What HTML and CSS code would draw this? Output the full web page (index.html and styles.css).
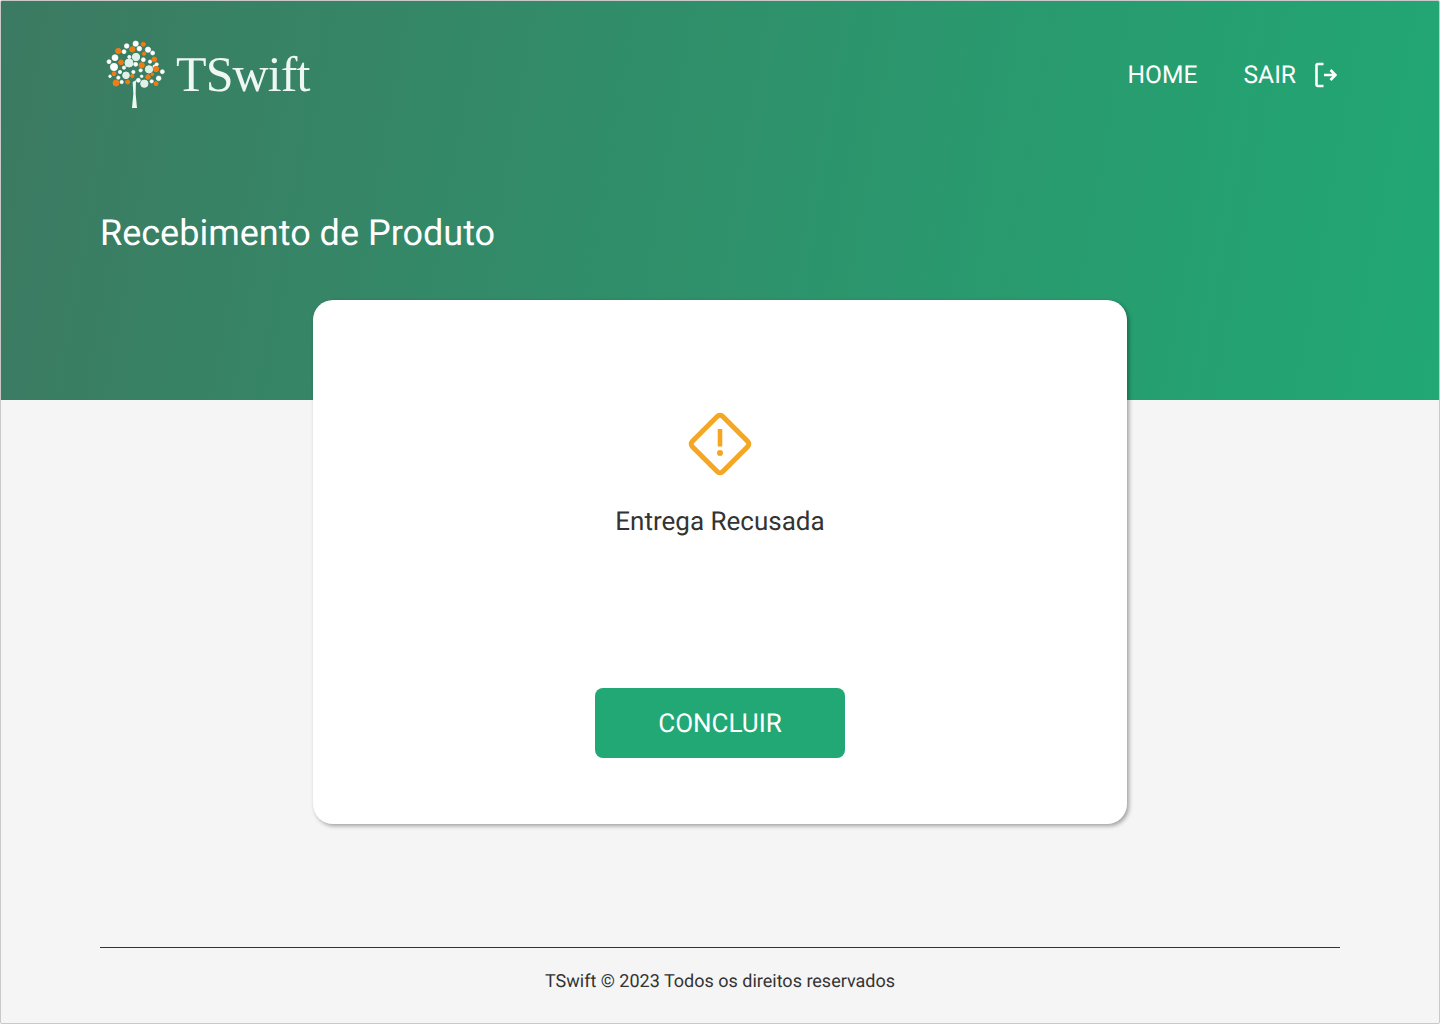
FILE: index.html
```html
<!DOCTYPE html>
<html lang="pt-BR">
<head>
<meta charset="utf-8">
<title>TSwift - Recebimento de Produto</title>
<link rel="stylesheet" href="styles.css">
</head>
<body>
<div class="page">
  <header class="hero">
    <div class="topbar">
      <a class="brand" href="#">
        <svg class="tree" viewBox="0 0 210 225" aria-hidden="true">
          <path class="trunk" d="M98 135 L108 130 L107 170 L111 213 L96 213 L100 170 Z"/>
          <g class="w">
            <circle cx="107" cy="20" r="8"/><circle cx="80" cy="27" r="7"/><circle cx="72" cy="44" r="6"/><circle cx="118" cy="35" r="7"/><circle cx="144" cy="38" r="8"/><circle cx="158" cy="48" r="6"/><circle cx="45" cy="62" r="9"/><circle cx="27" cy="74" r="6"/><circle cx="130" cy="68" r="6"/><circle cx="150" cy="74" r="5"/><circle cx="170" cy="82" r="5"/><circle cx="107" cy="82" r="6"/><circle cx="72" cy="92" r="5"/><circle cx="42" cy="90" r="11"/><circle cx="187" cy="104" r="6"/><circle cx="60" cy="105" r="5"/><circle cx="122" cy="100" r="5"/><circle cx="100" cy="105" r="5"/><circle cx="176" cy="124" r="7"/><circle cx="30" cy="118" r="4"/><circle cx="55" cy="122" r="5"/><circle cx="65" cy="135" r="5"/><circle cx="155" cy="133" r="5"/><circle cx="115" cy="130" r="6"/><circle cx="125" cy="118" r="4"/><circle cx="88" cy="60" r="5"/><circle cx="163" cy="88" r="4"/>
          </g>
          <g class="m">
            <circle cx="108" cy="60" r="11"/><circle cx="87" cy="78" r="12"/><circle cx="147" cy="97" r="11"/><circle cx="78" cy="115" r="10"/><circle cx="133" cy="140" r="11"/>
          </g>
          <g class="o">
            <circle cx="130" cy="22" r="6"/><circle cx="97" cy="37" r="8"/><circle cx="55" cy="42" r="8"/><circle cx="132" cy="50" r="5"/><circle cx="63" cy="76" r="7"/><circle cx="163" cy="67" r="7"/><circle cx="125" cy="85" r="8"/><circle cx="168" cy="96" r="8"/><circle cx="42" cy="110" r="6"/><circle cx="157" cy="112" r="4"/><circle cx="144" cy="120" r="7"/><circle cx="97" cy="117" r="5"/><circle cx="48" cy="138" r="9"/><circle cx="83" cy="135" r="6"/><circle cx="168" cy="140" r="6"/>
          </g>
        </svg>
        <span class="brand-name">TSwift</span>
      </a>
      <nav class="nav">
        <a class="nav-link" href="#">HOME</a>
        <a class="nav-link nav-exit" href="#">SAIR
          <svg class="exit" viewBox="0 0 22 26" aria-hidden="true">
            <path d="M8.5 2H3A1.5 1.5 0 0 0 1.5 3.5V22.5A1.5 1.5 0 0 0 3 24H8.5"/>
            <path d="M9 13H20.5M15.5 8L20.5 13L15.5 18"/>
          </svg>
        </a>
      </nav>
    </div>
    <h1 class="title">Recebimento de Produto</h1>
  </header>

  <main class="main">
    <section class="card">
      <svg class="warn" viewBox="0 0 64 64" aria-hidden="true">
        <rect class="warn-box" x="10.5" y="10.5" width="43" height="43" rx="4" transform="rotate(45 32 32)"/>
        <path class="warn-bar" d="M32 17V34.5"/>
        <circle class="warn-dot" cx="32" cy="41" r="3"/>
      </svg>
      <p class="status">Entrega Recusada</p>
      <a class="btn" href="#">CONCLUIR</a>
    </section>
  </main>

  <footer class="footer">TSwift © 2023 Todos os direitos reservados</footer>
</div>
</body>
</html>
```
FILE: styles.css
```css
* { box-sizing: border-box; }
html, body { margin: 0; padding: 0; }
body {
  font-family: Roboto, "Liberation Sans", sans-serif;
  background: #f5f5f5;
  color: #333;
  text-rendering: geometricPrecision;
}
a { color: inherit; text-decoration: none; }
.page {
  width: 1440px;
  height: 1024px;
  border: 1px solid #c9c9c9;
  border-radius: 2px;
  display: flex;
  flex-direction: column;
  overflow: hidden;
}
.hero {
  height: 399px;
  flex: none;
  background: linear-gradient(100deg, #3c7a62 0%, #21a874 100%);
  color: #fff;
  padding: 0 102px 0 99px;
}
.topbar {
  display: flex;
  justify-content: space-between;
  align-items: center;
  height: 147px;
}
.brand { display: flex; align-items: center; gap: 6px; }
.tree { width: 70px; height: 75px; display: block; flex: none; }
.trunk { fill: #eef8f3; }
.w circle { fill: #fff; stroke: #fff; stroke-width: 2; }
.m circle { fill: #dff2ea; stroke: #dff2ea; stroke-width: 3; }
.o circle { fill: #ef7d14; stroke: #ef7d14; stroke-width: 3; }
.brand-name {
  font-family: "Liberation Serif", serif;
  font-size: 50px;
  line-height: 60px;
  letter-spacing: -0.9px;
  color: #eef7f3;
  margin-bottom: 2px;
}
.nav { display: flex; align-items: center; gap: 46px; }
.nav-link { font-size: 24.6px; line-height: 30px; padding-top: 2px; }
.nav-exit { display: flex; align-items: center; gap: 19px; }
.exit {
  width: 22px;
  height: 26px;
  margin-top: -2px;
  fill: none;
  stroke: #fff;
  stroke-width: 2.6;
}
.title {
  margin: 62px 0 0;
  font-size: 36px;
  line-height: 46px;
  font-weight: 400;
}
.main {
  flex: 1;
  display: flex;
  justify-content: center;
  align-items: flex-start;
}
.card {
  width: 814px;
  height: 524px;
  margin-top: -100px;
  background: #fff;
  border-radius: 20px;
  box-shadow: 2px 2px 4px rgba(0, 0, 0, 0.35);
  display: flex;
  flex-direction: column;
  align-items: center;
  padding-top: 112px;
}
.warn { width: 64px; height: 64px; display: block; }
.warn-box { fill: none; stroke: #f5a623; stroke-width: 5; }
.warn-bar { fill: none; stroke: #f5a623; stroke-width: 4.6; }
.warn-dot { fill: #f5a623; }
.status {
  margin: 31px 0 0;
  font-size: 26px;
  line-height: 30px;
  color: #333;
}
.btn {
  margin-top: 151px;
  width: 250px;
  height: 70px;
  padding-top: 2px;
  display: flex;
  align-items: center;
  justify-content: center;
  border-radius: 8px;
  background: #21a874;
  color: #fff;
  font-size: 26px;
}
.footer {
  margin: 0 99px 24px 99px;
  height: 52px;
  border-top: 1px solid #333;
  padding-top: 23px;
  text-align: center;
  font-size: 18px;
  line-height: 22px;
  color: #333;
}
```
